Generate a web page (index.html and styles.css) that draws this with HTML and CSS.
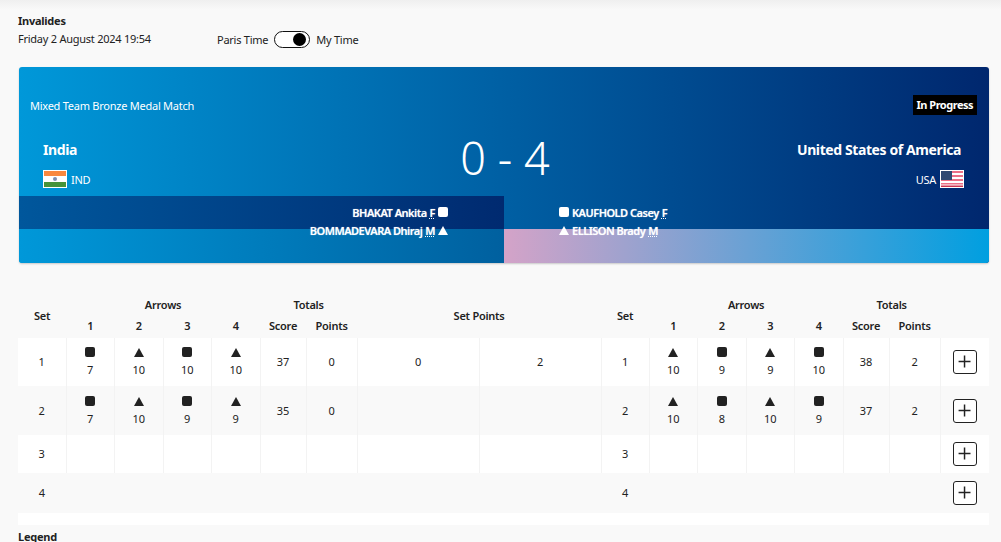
FILE: index.html
```html
<!DOCTYPE html>
<html>
<head>
    <title>Mixed Team Bronze Medal Match</title>
    <link rel="stylesheet" href="styles.css">
</head>
<body>
    <div class="info">
        <div class="venue">
            <div class="venue-name">Invalides</div>
            <div>Friday 2 August 2024 19:54</div>
        </div>
        <div class="time-switch">
            <span>Paris Time</span>
            <span class="toggle"><span class="knob"></span></span>
            <span>My Time</span>
        </div>
    </div>

    <!-- banner -->
    <div class="banner">
        <div class="banner-top">
            <span class="phase">Mixed Team Bronze Medal Match</span>
            <span class="status">In Progress</span>
        </div>
        <div class="teams">
            <div class="team">
                <div class="team-name">India</div>
                <div class="noc">
                    <svg class="flag" viewBox="0 0 24 18">
                        <rect width="24" height="18" fill="#fff"/>
                        <rect x="1" y="1" width="22" height="5" fill="#f9883f"/>
                        <rect x="1" y="12" width="22" height="5" fill="#45933a"/>
                        <circle cx="12" cy="9" r="2" fill="#7f8db0"/>
                    </svg>
                    <span>IND</span>
                </div>
            </div>
            <div class="score">0 - 4</div>
            <div class="team team-right">
                <div class="team-name">United States of America</div>
                <div class="noc">
                    <span>USA</span>
                    <svg class="flag" viewBox="0 0 24 18">
                        <rect width="24" height="18" fill="#fff"/>
                        <rect x="1" y="1" width="22" height="2" fill="#ec6f86"/>
                        <rect x="1" y="5" width="22" height="2" fill="#ec6f86"/>
                        <rect x="1" y="9" width="22" height="2" fill="#ec6f86"/>
                        <rect x="1" y="13" width="22" height="1.5" fill="#ec6f86"/>
                        <rect x="1" y="15.5" width="22" height="1.5" fill="#c9324f"/>
                        <rect x="1" y="1" width="11" height="9" fill="#2f4a72"/>
                    </svg>
                </div>
            </div>
        </div>
        <div class="players">
            <div class="side side-left">
                <div class="player">BHAKAT Ankita <abbr>F</abbr> <span class="mark-square"></span></div>
                <div class="player">BOMMADEVARA Dhiraj <abbr>M</abbr> <span class="mark-triangle"></span></div>
            </div>
            <div class="side side-right">
                <div class="player"><span class="mark-square"></span> KAUFHOLD Casey <abbr>F</abbr></div>
                <div class="player"><span class="mark-triangle"></span> ELLISON Brady <abbr>M</abbr></div>
            </div>
        </div>
    </div>

    <!-- sets -->
    <table class="sets">
        <colgroup>
            <col class="c-set"><col class="c-arrow"><col class="c-arrow"><col class="c-arrow"><col class="c-arrow"><col class="c-score"><col class="c-points">
            <col class="c-sp"><col class="c-sp">
            <col class="c-set"><col class="c-arrow"><col class="c-arrow"><col class="c-arrow"><col class="c-arrow"><col class="c-score"><col class="c-points"><col class="c-action">
        </colgroup>
        <thead>
            <tr>
                <th rowspan="2">Set</th><th colspan="4">Arrows</th><th colspan="2">Totals</th>
                <th colspan="2" rowspan="2">Set Points</th>
                <th rowspan="2">Set</th><th colspan="4">Arrows</th><th colspan="2">Totals</th><th rowspan="2"></th>
            </tr>
            <tr>
                <th>1</th><th>2</th><th>3</th><th>4</th><th>Score</th><th>Points</th>
                <th>1</th><th>2</th><th>3</th><th>4</th><th>Score</th><th>Points</th>
            </tr>
        </thead>
        <tbody>
            <tr class="row-first">
                <td>1</td>
                <td><span class="mark-square dark"></span>7</td>
                <td><span class="mark-triangle dark"></span>10</td>
                <td><span class="mark-square dark"></span>10</td>
                <td><span class="mark-triangle dark"></span>10</td>
                <td>37</td><td>0</td><td>0</td><td>2</td>
                <td>1</td>
                <td><span class="mark-triangle dark"></span>10</td>
                <td><span class="mark-square dark"></span>9</td>
                <td><span class="mark-triangle dark"></span>9</td>
                <td><span class="mark-square dark"></span>10</td>
                <td>38</td><td>2</td>
                <td><button class="btn-plus"><svg viewBox="0 0 24 24"><path d="M5 11.5h13M11.5 5v13"/></svg></button></td>
            </tr>
            <tr class="row-second">
                <td>2</td>
                <td><span class="mark-square dark"></span>7</td>
                <td><span class="mark-triangle dark"></span>10</td>
                <td><span class="mark-square dark"></span>9</td>
                <td><span class="mark-triangle dark"></span>9</td>
                <td>35</td><td>0</td><td></td><td></td>
                <td>2</td>
                <td><span class="mark-triangle dark"></span>10</td>
                <td><span class="mark-square dark"></span>8</td>
                <td><span class="mark-triangle dark"></span>10</td>
                <td><span class="mark-square dark"></span>9</td>
                <td>37</td><td>2</td>
                <td><button class="btn-plus"><svg viewBox="0 0 24 24"><path d="M5 11.5h13M11.5 5v13"/></svg></button></td>
            </tr>
            <tr class="row-third">
                <td>3</td><td></td><td></td><td></td><td></td><td></td><td></td><td></td><td></td>
                <td>3</td><td></td><td></td><td></td><td></td><td></td><td></td>
                <td><button class="btn-plus"><svg viewBox="0 0 24 24"><path d="M5 11.5h13M11.5 5v13"/></svg></button></td>
            </tr>
            <tr class="row-fourth">
                <td>4</td><td></td><td></td><td></td><td></td><td></td><td></td><td></td><td></td>
                <td>4</td><td></td><td></td><td></td><td></td><td></td><td></td>
                <td><button class="btn-plus"><svg viewBox="0 0 24 24"><path d="M5 11.5h13M11.5 5v13"/></svg></button></td>
            </tr>
        </tbody>
    </table>
    <div class="table-end"></div>

    <div class="legend">Legend</div>
</body>
</html>
```

FILE: styles.css
```css
html, body {
    height: 100%;
    overflow: hidden;
}
body {
    font-family: "Noto Sans", Arial, sans-serif;
    font-size: 11px;
    letter-spacing: -0.25px;
    color: #222;
    background-color: #f9f9f9;
    background-image: linear-gradient(#efefef, #f9f9f9 10px);
    margin: 0;
    padding: 12px 11px 0 18px;
}
.info {
    display: flex;
    align-items: flex-end;
    height: 36px;
    margin-bottom: 19px;
}
.venue {
    width: 199px;
    line-height: 18px;
}
.venue-name {
    font-weight: 700;
}
.time-switch {
    display: flex;
    align-items: center;
    gap: 6px;
    height: 18px;
}
.toggle {
    display: flex;
    justify-content: flex-end;
    align-items: center;
    box-sizing: border-box;
    width: 36px;
    height: 17px;
    padding-right: 3px;
    background-color: #fff;
    border: 1px solid #111;
    border-radius: 9px;
}
.knob {
    width: 13px;
    height: 13px;
    border-radius: 50%;
    background-color: #000;
}

/* banner */
.banner {
    width: 970px;
    height: 196px;
    margin-left: 1px;
    border-radius: 3px;
    overflow: hidden;
    color: #fff;
    background: linear-gradient(90deg, #0098d9, #00276e);
    box-shadow: 0 1px 2px rgba(0, 0, 0, 0.2);
}
.banner-top {
    display: flex;
    justify-content: space-between;
    align-items: center;
    height: 20px;
    padding: 28px 12px 1px 11px;
}
.status {
    padding: 0 4px;
    line-height: 20px;
    background-color: #000;
    font-weight: 700;
    letter-spacing: -0.5px;
}
.teams {
    display: flex;
    justify-content: space-between;
    height: 80px;
    padding: 0 25px 0 24px;
}
.team {
    width: 300px;
    padding-top: 24px;
}
.team-right {
    text-align: right;
}
.team-right .team-name {
    padding-right: 3px;
}
.team-name {
    font-size: 14px;
    font-weight: 700;
    letter-spacing: -0.4px;
    line-height: 20px;
}
.noc {
    display: flex;
    align-items: center;
    gap: 4px;
    margin-top: 10px;
}
.team-right .noc {
    justify-content: flex-end;
}
.flag {
    width: 24px;
    height: 18px;
}
.score {
    font-size: 45px;
    font-weight: 300;
    letter-spacing: 0;
    line-height: 60px;
    padding-top: 12px;
    margin-left: 3px;
}
.players {
    display: flex;
    height: 67px;
}
.side {
    display: flex;
    flex-direction: column;
    box-sizing: border-box;
    padding-top: 7px;
    font-weight: 600;
    letter-spacing: -0.5px;
    text-shadow: 0 0 1px rgba(255, 255, 255, 0.6);
}
.side-left {
    width: 485px;
    align-items: flex-end;
    padding-right: 56px;
    background:
        linear-gradient(90deg, #00579c, #002a70) top / 100% 33px no-repeat,
        linear-gradient(90deg, #0098d9, #00609f) bottom / 100% 34px no-repeat;
}
.side-right {
    flex: 1;
    padding-left: 55px;
    background: linear-gradient(90deg, #d4a3c8, #009fe0) bottom / 100% 34px no-repeat;
}
.player {
    display: flex;
    align-items: center;
    gap: 3px;
    height: 18px;
}
abbr {
    text-decoration: underline dotted;
}
.mark-square {
    display: inline-block;
    width: 10px;
    height: 10px;
    border-radius: 2px;
    background-color: #fff;
}
.mark-triangle {
    display: inline-block;
    width: 0;
    height: 0;
    border-left: 5px solid transparent;
    border-right: 5px solid transparent;
    border-bottom: 9px solid #fff;
}
.mark-square.dark,
.mark-triangle.dark {
    display: block;
    margin: 0 auto 6px;
}
.mark-square.dark {
    background-color: #222;
}
.mark-triangle.dark {
    border-bottom-color: #222;
    margin-top: 1px;
}

/* sets */
.sets {
    width: 971px;
    margin-top: 33px;
    border-collapse: collapse;
    table-layout: fixed;
}
.c-set { width: 48px; }
.c-arrow { width: 48.5px; }
.c-score { width: 46px; }
.c-points { width: 51px; }
.c-sp { width: 122px; }
.c-action { width: 49px; }
th {
    height: 21px;
    padding: 0 0 5px;
    box-sizing: border-box;
    font-weight: 600;
    text-align: center;
}
th[rowspan] {
    padding-bottom: 3px;
}
td {
    padding: 0;
    text-align: center;
    letter-spacing: 0;
    border-right: 1px solid #f3f3f3;
    line-height: 14px;
}
td:last-child {
    border-right: none;
}
.row-first td { height: 48px; background-color: #fff; }
.row-second td { height: 49px; }
.row-third td { height: 38px; background-color: #fff; }
.row-fourth td { height: 40px; border-right: none; }
.btn-plus {
    display: inline-block;
    box-sizing: border-box;
    width: 24px;
    height: 24px;
    padding: 0;
    margin-left: 1px;
    vertical-align: middle;
    background-color: #fff;
    border: 1px solid #222;
    border-radius: 3px;
}
.btn-plus svg {
    display: block;
    width: 22px;
    height: 22px;
    fill: none;
    stroke: #222;
    stroke-width: 1.6;
}
.table-end {
    height: 12px;
    width: 971px;
    background-color: #fff;
}
.legend {
    margin-top: 3px;
    line-height: 18px;
    font-weight: 700;
}
```
